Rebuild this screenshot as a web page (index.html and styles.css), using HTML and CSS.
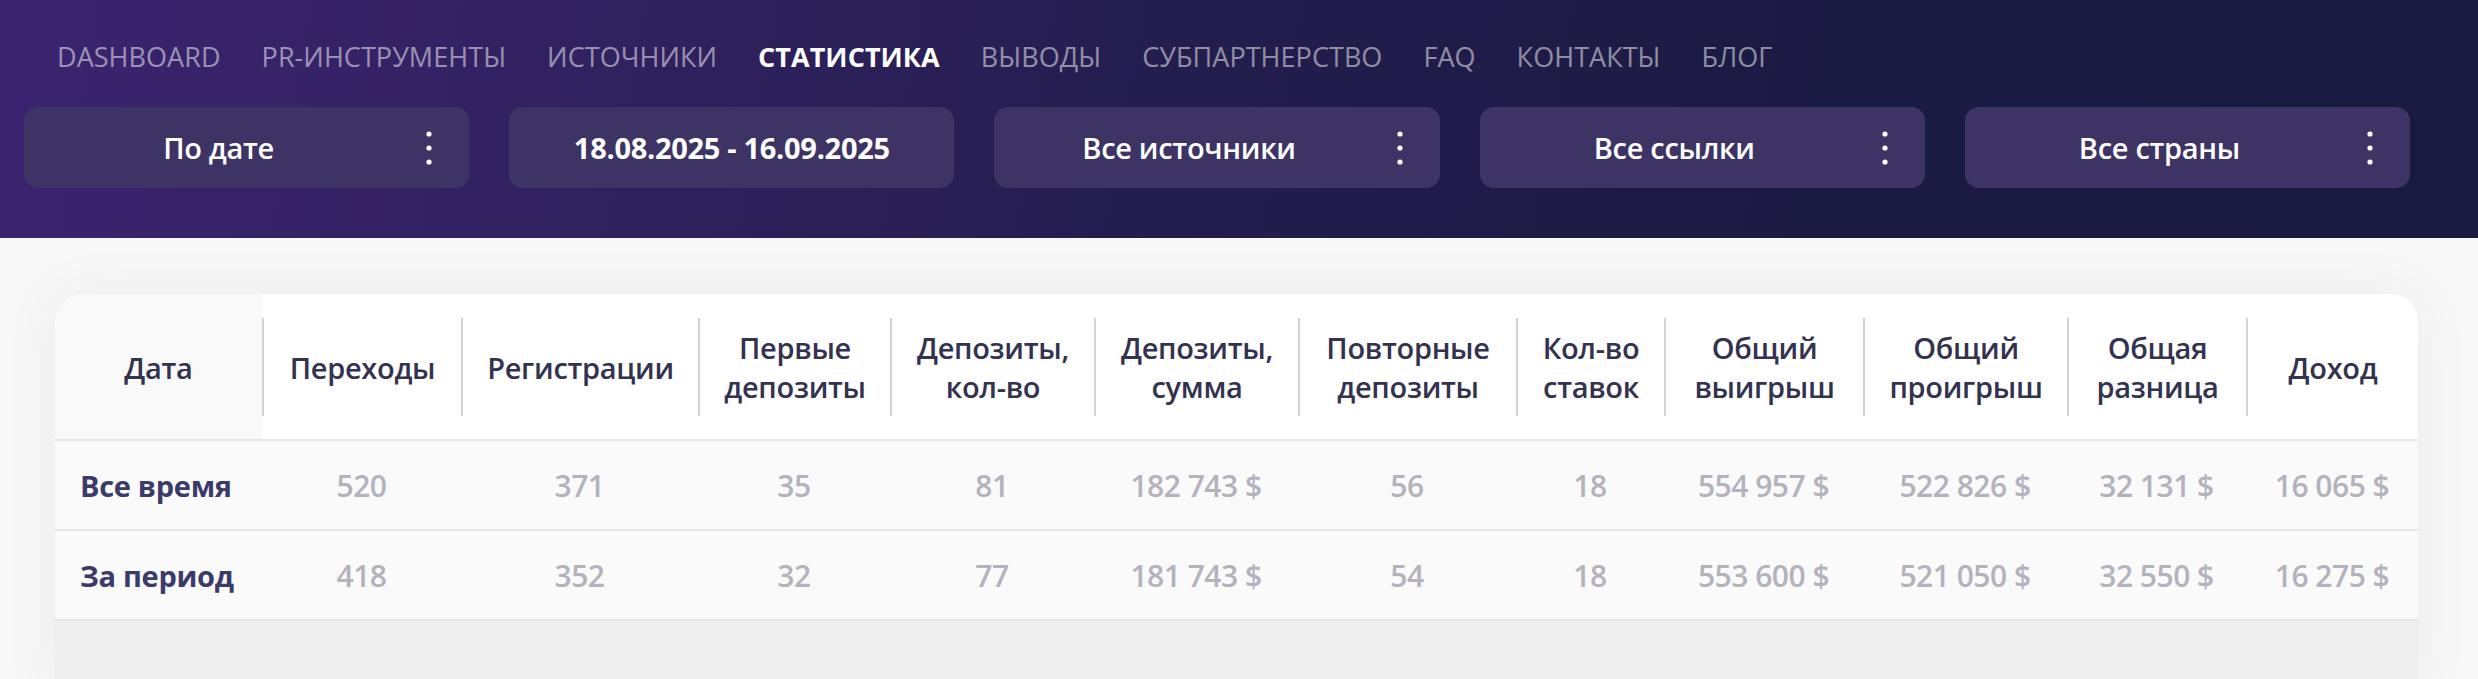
FILE: index.html
```html
<!DOCTYPE html>
<html lang="ru">
<head>
<meta charset="utf-8">
<title>Статистика</title>
<link rel="stylesheet" href="styles.css">
</head>
<body>
<header class="top">
  <nav class="menu">
    <a class="menu-item" href="#">DASHBOARD</a>
    <a class="menu-item" href="#">PR-ИНСТРУМЕНТЫ</a>
    <a class="menu-item" href="#">ИСТОЧНИКИ</a>
    <a class="menu-item active" href="#">СТАТИСТИКА</a>
    <a class="menu-item" href="#">ВЫВОДЫ</a>
    <a class="menu-item" href="#">СУБПАРТНЕРСТВО</a>
    <a class="menu-item" href="#">FAQ</a>
    <a class="menu-item" href="#">КОНТАКТЫ</a>
    <a class="menu-item" href="#">БЛОГ</a>
  </nav>
  <div class="filters">
    <div class="filter">
      <span class="filter-label">По дате</span>
      <span class="kebab"><svg width="6" height="34" viewBox="0 0 6 34"><circle cx="3" cy="3" r="2.6" fill="#fff"/><circle cx="3" cy="17" r="2.6" fill="#fff"/><circle cx="3" cy="31" r="2.6" fill="#fff"/></svg></span>
    </div>
    <div class="filter">
      <span class="filter-label bold">18.08.2025 - 16.09.2025</span>
    </div>
    <div class="filter">
      <span class="filter-label">Все источники</span>
      <span class="kebab"><svg width="6" height="34" viewBox="0 0 6 34"><circle cx="3" cy="3" r="2.6" fill="#fff"/><circle cx="3" cy="17" r="2.6" fill="#fff"/><circle cx="3" cy="31" r="2.6" fill="#fff"/></svg></span>
    </div>
    <div class="filter">
      <span class="filter-label">Все ссылки</span>
      <span class="kebab"><svg width="6" height="34" viewBox="0 0 6 34"><circle cx="3" cy="3" r="2.6" fill="#fff"/><circle cx="3" cy="17" r="2.6" fill="#fff"/><circle cx="3" cy="31" r="2.6" fill="#fff"/></svg></span>
    </div>
    <div class="filter">
      <span class="filter-label">Все страны</span>
      <span class="kebab"><svg width="6" height="34" viewBox="0 0 6 34"><circle cx="3" cy="3" r="2.6" fill="#fff"/><circle cx="3" cy="17" r="2.6" fill="#fff"/><circle cx="3" cy="31" r="2.6" fill="#fff"/></svg></span>
    </div>
  </div>
</header>
<main class="content">
  <section class="card">
    <table class="stats">
      <colgroup>
        <col class="w-date"><col class="w-clicks"><col class="w-reg"><col class="w-first">
        <col class="w-depcnt"><col class="w-depsum"><col class="w-repeat"><col class="w-bets">
        <col class="w-win"><col class="w-loss"><col class="w-diff"><col class="w-income">
      </colgroup>
      <thead>
        <tr>
          <th class="th-first"><div class="th-in">Дата</div></th>
          <th><div class="th-in sep">Переходы</div></th>
          <th><div class="th-in sep">Регистрации</div></th>
          <th><div class="th-in sep">Первые<br>депозиты</div></th>
          <th><div class="th-in sep">Депозиты,<br>кол-во</div></th>
          <th><div class="th-in sep">Депозиты,<br>сумма</div></th>
          <th><div class="th-in sep">Повторные<br>депозиты</div></th>
          <th><div class="th-in sep">Кол-во<br>ставок</div></th>
          <th><div class="th-in sep">Общий<br>выигрыш</div></th>
          <th><div class="th-in sep">Общий<br>проигрыш</div></th>
          <th><div class="th-in sep">Общая<br>разница</div></th>
          <th><div class="th-in sep">Доход</div></th>
        </tr>
      </thead>
      <tbody>
        <tr>
          <td class="label">Все время</td>
          <td>520</td><td>371</td><td>35</td><td>81</td><td>182 743 $</td>
          <td>56</td><td>18</td><td>554 957 $</td><td>522 826 $</td><td>32 131 $</td><td>16 065 $</td>
        </tr>
        <tr>
          <td class="label">За период</td>
          <td>418</td><td>352</td><td>32</td><td>77</td><td>181 743 $</td>
          <td>54</td><td>18</td><td>553 600 $</td><td>521 050 $</td><td>32 550 $</td><td>16 275 $</td>
        </tr>
      </tbody>
    </table>
  </section>
</main>
</body>
</html>
```
FILE: styles.css
```css
* { box-sizing: border-box; }
html, body { margin: 0; padding: 0; }
body {
  font-family: "Open Sans", "Noto Sans", sans-serif;
  background: #f8f8f8;
  width: 2478px;
  height: 679px;
  overflow: hidden;
}
.top {
  background: linear-gradient(100deg, #3b2470 0%, #30215f 25%, #221d4c 50%, #1b1a43 75%, #191a40 100%);
  padding: 37px 68px 50px 24px;
}
.menu {
  display: flex;
  gap: 41px;
  padding-left: 33px;
  height: 40px;
  align-items: center;
}
.menu-item {
  color: rgba(255,255,255,0.5);
  text-decoration: none;
  font-size: 27px;
  font-weight: 400;
  letter-spacing: 0.05px;
  line-height: 40px;
}
.menu-item.active {
  color: #fff;
  font-weight: 700;
}
.filters {
  display: flex;
  gap: 40px;
  margin-top: 30px;
}
.filter {
  flex: 1 1 0;
  min-width: 0;
  height: 81px;
  background: #3d3465;
  border-radius: 14px;
  display: flex;
  align-items: center;
  color: #fff;
}
.filter-label {
  flex: 1;
  text-align: center;
  font-size: 29px;
  font-weight: 600;
  letter-spacing: -0.3px;
}
.filter-label.bold { font-weight: 700; }
.kebab {
  width: 32px;
  margin-right: 24px;
  display: flex;
  justify-content: center;
  align-items: center;
}
.kebab svg { display: block; }
.content {
  padding: 56px 60px 0 55px;
}
.card {
  background: #efefef;
  border-radius: 26px 26px 0 0;
  overflow: hidden;
  height: 400px;
  box-shadow: 0 0 60px rgba(0,0,0,0.06);
}
.stats {
  width: 100%;
  border-collapse: collapse;
  table-layout: fixed;
}
.w-date { width: 207px; }
.w-clicks { width: 199px; }
.w-reg { width: 237px; }
.w-first { width: 192px; }
.w-depcnt { width: 204px; }
.w-depsum { width: 204px; }
.w-repeat { width: 218px; }
.w-bets { width: 148px; }
.w-win { width: 199px; }
.w-loss { width: 204px; }
.w-diff { width: 179px; }
.w-income { width: 172px; }
.stats th {
  background: #fff;
  padding: 24px 0 23px;
  font-weight: 600;
  font-size: 29px;
  line-height: 39px;
  color: #33324f;
  border-bottom: 2px solid #e6e6e8;
}
.stats th.th-first { background: #f9f9fa; }
.th-in {
  height: 98px;
  display: flex;
  align-items: center;
  justify-content: center;
  text-align: center;
  letter-spacing: -0.3px;
}
.th-in.sep { border-left: 2px solid #d2d2d6; }
.stats td {
  background: #fafafa;
  height: 90px;
  text-align: center;
  font-size: 30px;
  font-weight: 600;
  color: #b3b2bd;
  border-bottom: 2px solid #e6e6e8;
  letter-spacing: -0.5px;
  white-space: nowrap;
}
.stats td.label {
  text-align: left;
  padding-left: 25px;
  font-size: 29px;
  color: #3b3b6b;
  font-weight: 700;
  letter-spacing: -0.3px;
}
```
